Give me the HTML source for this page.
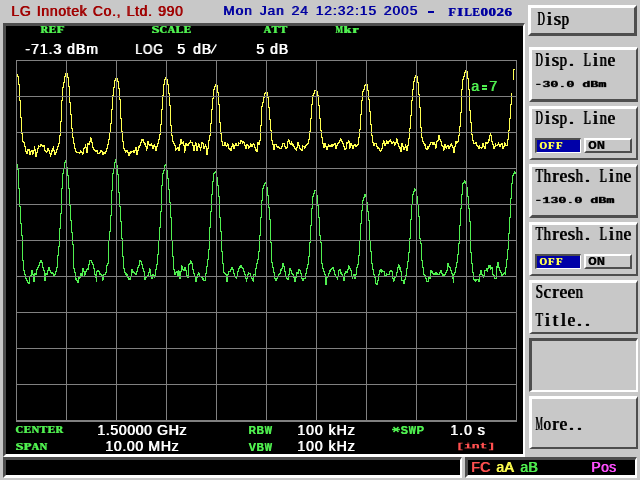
<!DOCTYPE html>
<html><head><meta charset="utf-8"><style>
html,body{margin:0;padding:0;}
body{width:640px;height:480px;background:#c8c8c8;position:relative;overflow:hidden;font-family:"Liberation Sans",sans-serif;}
.t{position:absolute;white-space:pre;line-height:1;will-change:transform;}
.t i{display:inline-block;position:relative;height:1em;font-style:normal;}
.t b{position:absolute;left:50%;top:0;font-weight:inherit;white-space:pre;}
.bx{position:absolute;box-sizing:border-box;border-style:solid;}
</style></head><body>
<div class="t" style="left:11.00px;top:3.78px;font-family:'Liberation Sans',sans-serif;font-weight:normal;font-size:14px;color:#a00000;letter-spacing:0.65px;word-spacing:1px;text-shadow:0.8px 0 0 #a00000;">LG Innotek Co., Ltd. 990</div>
<div class="t" style="left:223.00px;top:3.86px;font-family:'Liberation Sans',sans-serif;font-weight:normal;font-size:13.5px;color:#0000a0;letter-spacing:1.1px;word-spacing:2px;text-shadow:0.8px 0 0 #0000a0;">Mon Jan 24 12:32:15 2005</div>
<div style="position:absolute;left:428px;top:11px;width:6px;height:2px;background:#0000a0;"></div>
<div class="t" style="left:448.00px;top:4.95px;font-family:'Liberation Serif',serif;font-weight:bold;font-size:13.4px;color:#0000a0;display:flex;"><i style="width:8px"><b style="transform:translateX(-50%) scaleX(0.928);text-shadow:0.4px 0 0 #0000a0;">F</b></i><i style="width:8px"><b style="transform:translateX(-50%) scaleX(1.200);text-shadow:0.4px 0 0 #0000a0;">I</b></i><i style="width:8px"><b style="transform:translateX(-50%) scaleX(0.850);text-shadow:0.4px 0 0 #0000a0;">L</b></i><i style="width:8px"><b style="transform:translateX(-50%) scaleX(0.850);text-shadow:0.4px 0 0 #0000a0;">E</b></i><i style="width:8px"><b style="transform:translateX(-50%) scaleX(1.134);text-shadow:0.4px 0 0 #0000a0;">0</b></i><i style="width:8px"><b style="transform:translateX(-50%) scaleX(1.134);text-shadow:0.4px 0 0 #0000a0;">0</b></i><i style="width:8px"><b style="transform:translateX(-50%) scaleX(1.134);text-shadow:0.4px 0 0 #0000a0;">2</b></i><i style="width:8px"><b style="transform:translateX(-50%) scaleX(1.134);text-shadow:0.4px 0 0 #0000a0;">6</b></i></div>
<div class="bx" style="left:3px;top:23px;width:522px;height:434px;border-width:3px 2px 3px 3px;border-color:#4e4e4e #ffffff #ffffff #4e4e4e;background:#000;"></div>
<svg style="position:absolute;left:0;top:0" width="640" height="480">
<g shape-rendering="crispEdges" stroke="none">
<path fill="#ffff50" d="M17 74h1V77h-1ZM18 76h1V85h-1ZM19 84h1V101h-1ZM20 100h1V118h-1ZM21 117h1V134h-1ZM22 133h1V142h-1ZM23 141h1V143h-1ZM24 142h1V147h-1ZM25 146h1V152h-1ZM26 151h1V154h-1ZM27 149h1V154h-1ZM28 149h1V151h-1ZM29 149h1V155h-1ZM30 151h1V155h-1ZM31 150h1V152h-1ZM32 150h1V155h-1ZM33 150h1V154h-1ZM34 146h1V151h-1ZM35 149h1V157h-1ZM36 152h1V157h-1ZM37 148h1V153h-1ZM38 145h1V149h-1ZM39 146h1V147h-1ZM40 144h1V147h-1ZM41 144h1V146h-1ZM42 145h1V147h-1ZM43 145h1V147h-1ZM44 145h1V151h-1ZM45 150h1V152h-1ZM46 151h1V153h-1ZM47 148h1V152h-1ZM48 148h1V151h-1ZM49 150h1V154h-1ZM50 153h1V157h-1ZM51 150h1V155h-1ZM52 148h1V152h-1ZM53 146h1V151h-1ZM54 150h1V155h-1ZM55 152h1V155h-1ZM56 149h1V153h-1ZM57 146h1V150h-1ZM58 143h1V147h-1ZM59 135h1V144h-1ZM60 121h1V136h-1ZM61 100h1V122h-1ZM62 87h1V101h-1ZM63 82h1V88h-1ZM64 76h1V83h-1ZM65 73h1V77h-1ZM66 73h1V74h-1ZM67 73h1V78h-1ZM68 77h1V87h-1ZM69 86h1V103h-1ZM70 102h1V115h-1ZM71 114h1V129h-1ZM72 128h1V138h-1ZM73 137h1V144h-1ZM74 143h1V149h-1ZM75 148h1V152h-1ZM76 151h1V153h-1ZM77 152h1V153h-1ZM78 152h1V153h-1ZM79 152h1V154h-1ZM80 150h1V153h-1ZM81 151h1V153h-1ZM82 152h1V155h-1ZM83 148h1V154h-1ZM84 147h1V149h-1ZM85 144h1V148h-1ZM86 147h1V153h-1ZM87 143h1V153h-1ZM88 143h1V145h-1ZM89 141h1V145h-1ZM90 137h1V142h-1ZM91 138h1V143h-1ZM92 142h1V148h-1ZM93 147h1V150h-1ZM94 149h1V151h-1ZM95 150h1V152h-1ZM96 150h1V152h-1ZM97 150h1V154h-1ZM98 153h1V154h-1ZM99 152h1V154h-1ZM100 150h1V153h-1ZM101 150h1V152h-1ZM102 151h1V155h-1ZM103 152h1V155h-1ZM104 152h1V154h-1ZM105 151h1V154h-1ZM106 148h1V152h-1ZM107 144h1V149h-1ZM108 139h1V145h-1ZM109 132h1V140h-1ZM110 123h1V133h-1ZM111 109h1V124h-1ZM112 95h1V110h-1ZM113 87h1V96h-1ZM114 80h1V88h-1ZM115 78h1V81h-1ZM116 77h1V79h-1ZM117 78h1V82h-1ZM118 81h1V89h-1ZM119 88h1V100h-1ZM120 99h1V119h-1ZM121 118h1V132h-1ZM122 131h1V142h-1ZM123 141h1V149h-1ZM124 148h1V151h-1ZM125 150h1V153h-1ZM126 150h1V152h-1ZM127 150h1V153h-1ZM128 152h1V156h-1ZM129 152h1V156h-1ZM130 151h1V154h-1ZM131 151h1V153h-1ZM132 151h1V152h-1ZM133 150h1V153h-1ZM134 150h1V153h-1ZM135 147h1V151h-1ZM136 147h1V155h-1ZM137 150h1V155h-1ZM138 146h1V151h-1ZM139 145h1V148h-1ZM140 142h1V146h-1ZM141 139h1V143h-1ZM142 139h1V141h-1ZM143 139h1V143h-1ZM144 142h1V145h-1ZM145 143h1V147h-1ZM146 146h1V151h-1ZM147 141h1V149h-1ZM148 141h1V145h-1ZM149 144h1V146h-1ZM150 144h1V146h-1ZM151 143h1V146h-1ZM152 145h1V149h-1ZM153 145h1V149h-1ZM154 144h1V147h-1ZM155 146h1V151h-1ZM156 146h1V151h-1ZM157 143h1V147h-1ZM158 139h1V144h-1ZM159 134h1V140h-1ZM160 124h1V135h-1ZM161 109h1V125h-1ZM162 95h1V110h-1ZM163 84h1V96h-1ZM164 79h1V85h-1ZM165 77h1V80h-1ZM166 76h1V80h-1ZM167 79h1V85h-1ZM168 84h1V94h-1ZM169 93h1V106h-1ZM170 105h1V126h-1ZM171 125h1V136h-1ZM172 135h1V142h-1ZM173 141h1V144h-1ZM174 143h1V146h-1ZM175 145h1V151h-1ZM176 148h1V150h-1ZM177 147h1V149h-1ZM178 147h1V151h-1ZM179 144h1V151h-1ZM180 139h1V145h-1ZM181 139h1V144h-1ZM182 142h1V144h-1ZM183 141h1V146h-1ZM184 145h1V153h-1ZM185 143h1V151h-1ZM186 143h1V146h-1ZM187 144h1V146h-1ZM188 143h1V146h-1ZM189 142h1V144h-1ZM190 140h1V143h-1ZM191 142h1V143h-1ZM192 142h1V146h-1ZM193 145h1V151h-1ZM194 145h1V151h-1ZM195 142h1V146h-1ZM196 143h1V151h-1ZM197 146h1V151h-1ZM198 143h1V147h-1ZM199 144h1V148h-1ZM200 147h1V151h-1ZM201 142h1V148h-1ZM202 142h1V144h-1ZM203 143h1V149h-1ZM204 146h1V149h-1ZM205 144h1V147h-1ZM206 146h1V155h-1ZM207 148h1V155h-1ZM208 140h1V149h-1ZM209 135h1V141h-1ZM210 123h1V136h-1ZM211 109h1V124h-1ZM212 98h1V110h-1ZM213 89h1V99h-1ZM214 86h1V90h-1ZM215 84h1V87h-1ZM216 83h1V86h-1ZM217 85h1V93h-1ZM218 92h1V105h-1ZM219 104h1V123h-1ZM220 122h1V134h-1ZM221 133h1V142h-1ZM222 141h1V146h-1ZM223 145h1V146h-1ZM224 142h1V146h-1ZM225 142h1V146h-1ZM226 145h1V147h-1ZM227 143h1V146h-1ZM228 144h1V149h-1ZM229 148h1V150h-1ZM230 148h1V151h-1ZM231 146h1V151h-1ZM232 143h1V147h-1ZM233 144h1V149h-1ZM234 145h1V149h-1ZM235 143h1V146h-1ZM236 143h1V146h-1ZM237 145h1V146h-1ZM238 142h1V146h-1ZM239 143h1V144h-1ZM240 140h1V144h-1ZM241 140h1V142h-1ZM242 141h1V144h-1ZM243 141h1V143h-1ZM244 142h1V146h-1ZM245 145h1V149h-1ZM246 144h1V149h-1ZM247 144h1V146h-1ZM248 145h1V149h-1ZM249 146h1V148h-1ZM250 143h1V147h-1ZM251 144h1V147h-1ZM252 144h1V147h-1ZM253 143h1V145h-1ZM254 144h1V148h-1ZM255 147h1V151h-1ZM256 149h1V152h-1ZM257 142h1V152h-1ZM258 142h1V145h-1ZM259 140h1V145h-1ZM260 125h1V141h-1ZM261 106h1V126h-1ZM262 102h1V107h-1ZM263 97h1V103h-1ZM264 93h1V98h-1ZM265 92h1V94h-1ZM266 91h1V93h-1ZM267 92h1V98h-1ZM268 97h1V108h-1ZM269 107h1V120h-1ZM270 119h1V131h-1ZM271 130h1V141h-1ZM272 140h1V145h-1ZM273 144h1V150h-1ZM274 144h1V150h-1ZM275 144h1V145h-1ZM276 144h1V147h-1ZM277 146h1V148h-1ZM278 146h1V148h-1ZM279 147h1V149h-1ZM280 148h1V149h-1ZM281 146h1V149h-1ZM282 143h1V147h-1ZM283 143h1V144h-1ZM284 143h1V147h-1ZM285 146h1V149h-1ZM286 147h1V149h-1ZM287 141h1V148h-1ZM288 139h1V142h-1ZM289 140h1V144h-1ZM290 143h1V145h-1ZM291 141h1V145h-1ZM292 143h1V146h-1ZM293 144h1V147h-1ZM294 146h1V149h-1ZM295 148h1V150h-1ZM296 147h1V151h-1ZM297 142h1V148h-1ZM298 142h1V146h-1ZM299 145h1V149h-1ZM300 148h1V150h-1ZM301 149h1V151h-1ZM302 145h1V151h-1ZM303 146h1V147h-1ZM304 146h1V149h-1ZM305 145h1V148h-1ZM306 144h1V146h-1ZM307 143h1V145h-1ZM308 139h1V144h-1ZM309 131h1V140h-1ZM310 118h1V132h-1ZM311 104h1V119h-1ZM312 95h1V105h-1ZM313 93h1V96h-1ZM314 90h1V94h-1ZM315 90h1V91h-1ZM316 90h1V92h-1ZM317 91h1V96h-1ZM318 95h1V106h-1ZM319 105h1V119h-1ZM320 118h1V131h-1ZM321 130h1V138h-1ZM322 137h1V144h-1ZM323 143h1V148h-1ZM324 143h1V148h-1ZM325 143h1V147h-1ZM326 146h1V150h-1ZM327 146h1V150h-1ZM328 144h1V147h-1ZM329 145h1V147h-1ZM330 145h1V147h-1ZM331 144h1V147h-1ZM332 144h1V147h-1ZM333 144h1V146h-1ZM334 143h1V145h-1ZM335 143h1V149h-1ZM336 145h1V149h-1ZM337 143h1V146h-1ZM338 142h1V144h-1ZM339 140h1V143h-1ZM340 138h1V141h-1ZM341 139h1V142h-1ZM342 141h1V144h-1ZM343 143h1V147h-1ZM344 146h1V150h-1ZM345 148h1V150h-1ZM346 142h1V149h-1ZM347 142h1V144h-1ZM348 140h1V143h-1ZM349 141h1V149h-1ZM350 143h1V148h-1ZM351 143h1V146h-1ZM352 145h1V149h-1ZM353 145h1V149h-1ZM354 144h1V146h-1ZM355 144h1V147h-1ZM356 145h1V147h-1ZM357 144h1V146h-1ZM358 137h1V145h-1ZM359 129h1V138h-1ZM360 114h1V130h-1ZM361 100h1V115h-1ZM362 91h1V101h-1ZM363 89h1V92h-1ZM364 85h1V90h-1ZM365 84h1V86h-1ZM366 83h1V85h-1ZM367 84h1V91h-1ZM368 90h1V100h-1ZM369 99h1V112h-1ZM370 111h1V125h-1ZM371 124h1V136h-1ZM372 135h1V143h-1ZM373 142h1V146h-1ZM374 143h1V146h-1ZM375 143h1V144h-1ZM376 143h1V147h-1ZM377 146h1V149h-1ZM378 147h1V149h-1ZM379 148h1V151h-1ZM380 150h1V152h-1ZM381 148h1V151h-1ZM382 143h1V149h-1ZM383 140h1V144h-1ZM384 141h1V146h-1ZM385 143h1V146h-1ZM386 140h1V144h-1ZM387 141h1V144h-1ZM388 141h1V144h-1ZM389 140h1V142h-1ZM390 139h1V142h-1ZM391 141h1V144h-1ZM392 142h1V144h-1ZM393 141h1V143h-1ZM394 142h1V146h-1ZM395 142h1V145h-1ZM396 138h1V143h-1ZM397 139h1V144h-1ZM398 143h1V147h-1ZM399 146h1V149h-1ZM400 147h1V152h-1ZM401 143h1V152h-1ZM402 143h1V147h-1ZM403 146h1V150h-1ZM404 147h1V150h-1ZM405 144h1V148h-1ZM406 146h1V151h-1ZM407 145h1V151h-1ZM408 138h1V146h-1ZM409 128h1V139h-1ZM410 115h1V129h-1ZM411 100h1V116h-1ZM412 89h1V101h-1ZM413 81h1V90h-1ZM414 77h1V82h-1ZM415 75h1V78h-1ZM416 75h1V77h-1ZM417 76h1V83h-1ZM418 82h1V95h-1ZM419 94h1V108h-1ZM420 107h1V128h-1ZM421 127h1V138h-1ZM422 137h1V142h-1ZM423 141h1V144h-1ZM424 143h1V146h-1ZM425 144h1V149h-1ZM426 148h1V150h-1ZM427 146h1V150h-1ZM428 146h1V149h-1ZM429 144h1V147h-1ZM430 142h1V145h-1ZM431 142h1V143h-1ZM432 142h1V145h-1ZM433 142h1V145h-1ZM434 142h1V145h-1ZM435 144h1V149h-1ZM436 141h1V148h-1ZM437 140h1V142h-1ZM438 135h1V141h-1ZM439 135h1V140h-1ZM440 139h1V142h-1ZM441 141h1V146h-1ZM442 145h1V147h-1ZM443 146h1V151h-1ZM444 144h1V150h-1ZM445 144h1V148h-1ZM446 146h1V149h-1ZM447 145h1V147h-1ZM448 145h1V149h-1ZM449 146h1V149h-1ZM450 144h1V147h-1ZM451 143h1V146h-1ZM452 145h1V148h-1ZM453 147h1V153h-1ZM454 146h1V153h-1ZM455 141h1V147h-1ZM456 141h1V144h-1ZM457 141h1V143h-1ZM458 135h1V142h-1ZM459 126h1V136h-1ZM460 112h1V127h-1ZM461 89h1V113h-1ZM462 79h1V90h-1ZM463 76h1V80h-1ZM464 72h1V77h-1ZM465 70h1V73h-1ZM466 69h1V72h-1ZM467 71h1V79h-1ZM468 78h1V90h-1ZM469 89h1V111h-1ZM470 110h1V123h-1ZM471 122h1V135h-1ZM472 134h1V141h-1ZM473 140h1V144h-1ZM474 143h1V144h-1ZM475 142h1V144h-1ZM476 142h1V146h-1ZM477 145h1V147h-1ZM478 146h1V149h-1ZM479 145h1V149h-1ZM480 147h1V148h-1ZM481 147h1V149h-1ZM482 143h1V148h-1ZM483 143h1V147h-1ZM484 146h1V149h-1ZM485 142h1V149h-1ZM486 142h1V144h-1ZM487 142h1V144h-1ZM488 139h1V143h-1ZM489 135h1V141h-1ZM490 133h1V136h-1ZM491 135h1V142h-1ZM492 141h1V145h-1ZM493 144h1V149h-1ZM494 146h1V149h-1ZM495 143h1V147h-1ZM496 145h1V146h-1ZM497 144h1V146h-1ZM498 142h1V145h-1ZM499 144h1V147h-1ZM500 144h1V147h-1ZM501 143h1V145h-1ZM502 143h1V149h-1ZM503 146h1V149h-1ZM504 142h1V147h-1ZM505 143h1V146h-1ZM506 145h1V146h-1ZM507 139h1V146h-1ZM508 130h1V140h-1ZM509 118h1V131h-1ZM510 104h1V119h-1ZM511 93h1V105h-1Z"/>
<path fill="#ffff50" d="M513 69h1V80h-1ZM514 69h1v1h-1Z"/>
<path fill="#50f050" d="M17 164h1V170h-1ZM18 169h1V189h-1ZM19 188h1V207h-1ZM20 206h1V224h-1ZM21 223h1V236h-1ZM22 235h1V261h-1ZM23 260h1V271h-1ZM24 270h1V275h-1ZM25 274h1V279h-1ZM26 278h1V281h-1ZM27 280h1V283h-1ZM28 282h1V284h-1ZM29 276h1V284h-1ZM30 275h1V277h-1ZM31 270h1V276h-1ZM32 270h1V275h-1ZM33 274h1V282h-1ZM34 273h1V282h-1ZM35 273h1V275h-1ZM36 269h1V275h-1ZM37 267h1V270h-1ZM38 265h1V268h-1ZM39 262h1V266h-1ZM40 260h1V263h-1ZM41 260h1V263h-1ZM42 262h1V268h-1ZM43 267h1V271h-1ZM44 270h1V281h-1ZM45 273h1V281h-1ZM46 273h1V275h-1ZM47 270h1V275h-1ZM48 267h1V271h-1ZM49 267h1V271h-1ZM50 270h1V273h-1ZM51 272h1V274h-1ZM52 272h1V274h-1ZM53 273h1V277h-1ZM54 274h1V277h-1ZM55 271h1V275h-1ZM56 267h1V272h-1ZM57 255h1V268h-1ZM58 246h1V256h-1ZM59 228h1V247h-1ZM60 213h1V229h-1ZM61 188h1V214h-1ZM62 173h1V189h-1ZM63 168h1V174h-1ZM64 162h1V169h-1ZM65 160h1V163h-1ZM66 160h1V168h-1ZM67 167h1V176h-1ZM68 175h1V189h-1ZM69 188h1V206h-1ZM70 205h1V221h-1ZM71 220h1V233h-1ZM72 232h1V245h-1ZM73 244h1V269h-1ZM74 268h1V273h-1ZM75 272h1V280h-1ZM76 278h1V281h-1ZM77 280h1V283h-1ZM78 277h1V283h-1ZM79 277h1V279h-1ZM80 273h1V278h-1ZM81 273h1V277h-1ZM82 268h1V276h-1ZM83 268h1V272h-1ZM84 271h1V276h-1ZM85 271h1V275h-1ZM86 269h1V272h-1ZM87 268h1V270h-1ZM88 264h1V270h-1ZM89 260h1V265h-1ZM90 260h1V261h-1ZM91 260h1V263h-1ZM92 262h1V265h-1ZM93 264h1V269h-1ZM94 268h1V275h-1ZM95 274h1V278h-1ZM96 271h1V282h-1ZM97 270h1V272h-1ZM98 270h1V272h-1ZM99 271h1V275h-1ZM100 273h1V275h-1ZM101 274h1V276h-1ZM102 275h1V281h-1ZM103 274h1V280h-1ZM104 274h1V275h-1ZM105 272h1V275h-1ZM106 265h1V273h-1ZM107 263h1V266h-1ZM108 240h1V264h-1ZM109 231h1V241h-1ZM110 215h1V232h-1ZM111 190h1V216h-1ZM112 173h1V191h-1ZM113 168h1V174h-1ZM114 162h1V169h-1ZM115 159h1V163h-1ZM116 160h1V166h-1ZM117 165h1V175h-1ZM118 174h1V193h-1ZM119 192h1V207h-1ZM120 206h1V222h-1ZM121 221h1V239h-1ZM122 238h1V257h-1ZM123 256h1V269h-1ZM124 268h1V273h-1ZM125 272h1V275h-1ZM126 273h1V276h-1ZM127 274h1V278h-1ZM128 276h1V280h-1ZM129 278h1V280h-1ZM130 276h1V280h-1ZM131 269h1V277h-1ZM132 269h1V273h-1ZM133 271h1V273h-1ZM134 272h1V274h-1ZM135 273h1V275h-1ZM136 271h1V275h-1ZM137 267h1V272h-1ZM138 265h1V268h-1ZM139 260h1V266h-1ZM140 260h1V262h-1ZM141 261h1V265h-1ZM142 264h1V269h-1ZM143 268h1V272h-1ZM144 271h1V280h-1ZM145 276h1V280h-1ZM146 276h1V278h-1ZM147 275h1V277h-1ZM148 272h1V276h-1ZM149 268h1V273h-1ZM150 269h1V276h-1ZM151 275h1V279h-1ZM152 274h1V279h-1ZM153 274h1V276h-1ZM154 275h1V278h-1ZM155 269h1V276h-1ZM156 264h1V270h-1ZM157 254h1V265h-1ZM158 240h1V255h-1ZM159 227h1V241h-1ZM160 211h1V228h-1ZM161 185h1V212h-1ZM162 173h1V186h-1ZM163 170h1V174h-1ZM164 165h1V171h-1ZM165 164h1V166h-1ZM166 165h1V171h-1ZM167 170h1V179h-1ZM168 178h1V190h-1ZM169 189h1V203h-1ZM170 202h1V218h-1ZM171 217h1V241h-1ZM172 240h1V257h-1ZM173 256h1V270h-1ZM174 269h1V275h-1ZM175 272h1V275h-1ZM176 271h1V273h-1ZM177 271h1V276h-1ZM178 270h1V276h-1ZM179 271h1V279h-1ZM180 271h1V279h-1ZM181 265h1V272h-1ZM182 266h1V270h-1ZM183 269h1V271h-1ZM184 267h1V271h-1ZM185 267h1V271h-1ZM186 270h1V277h-1ZM187 275h1V278h-1ZM188 264h1V278h-1ZM189 263h1V265h-1ZM190 260h1V264h-1ZM191 261h1V264h-1ZM192 263h1V270h-1ZM193 269h1V274h-1ZM194 273h1V277h-1ZM195 276h1V282h-1ZM196 276h1V282h-1ZM197 274h1V278h-1ZM198 272h1V275h-1ZM199 273h1V277h-1ZM200 276h1V277h-1ZM201 276h1V278h-1ZM202 277h1V280h-1ZM203 278h1V281h-1ZM204 280h1V281h-1ZM205 273h1V281h-1ZM206 266h1V274h-1ZM207 259h1V267h-1ZM208 249h1V260h-1ZM209 227h1V250h-1ZM210 211h1V228h-1ZM211 194h1V212h-1ZM212 181h1V195h-1ZM213 173h1V182h-1ZM214 172h1V174h-1ZM215 171h1V173h-1ZM216 172h1V178h-1ZM217 177h1V186h-1ZM218 185h1V197h-1ZM219 196h1V218h-1ZM220 217h1V232h-1ZM221 231h1V252h-1ZM222 251h1V264h-1ZM223 263h1V273h-1ZM224 272h1V274h-1ZM225 273h1V275h-1ZM226 274h1V282h-1ZM227 274h1V282h-1ZM228 271h1V275h-1ZM229 271h1V272h-1ZM230 269h1V272h-1ZM231 267h1V270h-1ZM232 267h1V270h-1ZM233 269h1V274h-1ZM234 273h1V277h-1ZM235 276h1V278h-1ZM236 276h1V279h-1ZM237 271h1V277h-1ZM238 268h1V272h-1ZM239 266h1V269h-1ZM240 265h1V268h-1ZM241 265h1V268h-1ZM242 267h1V269h-1ZM243 268h1V272h-1ZM244 271h1V275h-1ZM245 274h1V279h-1ZM246 278h1V282h-1ZM247 274h1V279h-1ZM248 272h1V275h-1ZM249 273h1V274h-1ZM250 273h1V277h-1ZM251 276h1V279h-1ZM252 278h1V281h-1ZM253 274h1V282h-1ZM254 274h1V275h-1ZM255 268h1V277h-1ZM256 263h1V269h-1ZM257 259h1V264h-1ZM258 251h1V260h-1ZM259 235h1V252h-1ZM260 217h1V236h-1ZM261 200h1V218h-1ZM262 188h1V201h-1ZM263 185h1V189h-1ZM264 183h1V186h-1ZM265 182h1V184h-1ZM266 183h1V188h-1ZM267 187h1V196h-1ZM268 195h1V208h-1ZM269 207h1V220h-1ZM270 219h1V243h-1ZM271 242h1V263h-1ZM272 262h1V268h-1ZM273 267h1V273h-1ZM274 272h1V279h-1ZM275 278h1V281h-1ZM276 278h1V281h-1ZM277 276h1V279h-1ZM278 274h1V277h-1ZM279 273h1V275h-1ZM280 269h1V274h-1ZM281 268h1V271h-1ZM282 263h1V269h-1ZM283 263h1V267h-1ZM284 266h1V272h-1ZM285 271h1V277h-1ZM286 276h1V279h-1ZM287 278h1V280h-1ZM288 274h1V280h-1ZM289 268h1V275h-1ZM290 268h1V271h-1ZM291 270h1V274h-1ZM292 273h1V275h-1ZM293 274h1V278h-1ZM294 277h1V282h-1ZM295 277h1V282h-1ZM296 272h1V278h-1ZM297 272h1V274h-1ZM298 269h1V274h-1ZM299 269h1V271h-1ZM300 270h1V274h-1ZM301 273h1V279h-1ZM302 278h1V281h-1ZM303 278h1V281h-1ZM304 278h1V279h-1ZM305 273h1V279h-1ZM306 268h1V274h-1ZM307 264h1V269h-1ZM308 256h1V265h-1ZM309 242h1V257h-1ZM310 225h1V243h-1ZM311 208h1V226h-1ZM312 196h1V209h-1ZM313 193h1V197h-1ZM314 190h1V194h-1ZM315 190h1V191h-1ZM316 190h1V196h-1ZM317 195h1V206h-1ZM318 205h1V218h-1ZM319 217h1V236h-1ZM320 235h1V243h-1ZM321 242h1V264h-1ZM322 263h1V269h-1ZM323 268h1V272h-1ZM324 271h1V275h-1ZM325 274h1V285h-1ZM326 277h1V285h-1ZM327 276h1V278h-1ZM328 273h1V277h-1ZM329 270h1V274h-1ZM330 269h1V272h-1ZM331 268h1V270h-1ZM332 267h1V269h-1ZM333 267h1V271h-1ZM334 270h1V275h-1ZM335 274h1V277h-1ZM336 276h1V278h-1ZM337 276h1V280h-1ZM338 270h1V277h-1ZM339 269h1V271h-1ZM340 269h1V274h-1ZM341 272h1V275h-1ZM342 274h1V277h-1ZM343 276h1V281h-1ZM344 273h1V281h-1ZM345 271h1V274h-1ZM346 271h1V273h-1ZM347 269h1V273h-1ZM348 265h1V270h-1ZM349 266h1V269h-1ZM350 268h1V271h-1ZM351 270h1V277h-1ZM352 276h1V279h-1ZM353 274h1V277h-1ZM354 274h1V279h-1ZM355 274h1V279h-1ZM356 267h1V275h-1ZM357 264h1V268h-1ZM358 255h1V265h-1ZM359 240h1V256h-1ZM360 223h1V241h-1ZM361 210h1V224h-1ZM362 200h1V211h-1ZM363 197h1V201h-1ZM364 194h1V198h-1ZM365 194h1V197h-1ZM366 196h1V203h-1ZM367 202h1V212h-1ZM368 211h1V221h-1ZM369 220h1V241h-1ZM370 240h1V252h-1ZM371 251h1V264h-1ZM372 263h1V270h-1ZM373 269h1V275h-1ZM374 274h1V278h-1ZM375 277h1V284h-1ZM376 283h1V285h-1ZM377 280h1V285h-1ZM378 274h1V281h-1ZM379 270h1V275h-1ZM380 269h1V272h-1ZM381 269h1V273h-1ZM382 270h1V272h-1ZM383 271h1V272h-1ZM384 271h1V276h-1ZM385 275h1V277h-1ZM386 273h1V277h-1ZM387 274h1V275h-1ZM388 274h1V275h-1ZM389 271h1V275h-1ZM390 270h1V272h-1ZM391 270h1V272h-1ZM392 271h1V279h-1ZM393 278h1V282h-1ZM394 277h1V281h-1ZM395 276h1V278h-1ZM396 272h1V277h-1ZM397 267h1V273h-1ZM398 264h1V268h-1ZM399 265h1V270h-1ZM400 267h1V272h-1ZM401 271h1V281h-1ZM402 280h1V281h-1ZM403 280h1V284h-1ZM404 279h1V284h-1ZM405 275h1V280h-1ZM406 268h1V276h-1ZM407 261h1V269h-1ZM408 252h1V262h-1ZM409 238h1V253h-1ZM410 219h1V239h-1ZM411 204h1V220h-1ZM412 194h1V205h-1ZM413 191h1V195h-1ZM414 188h1V192h-1ZM415 189h1V191h-1ZM416 190h1V197h-1ZM417 196h1V205h-1ZM418 204h1V217h-1ZM419 216h1V239h-1ZM420 238h1V244h-1ZM421 243h1V261h-1ZM422 260h1V268h-1ZM423 267h1V275h-1ZM424 274h1V276h-1ZM425 275h1V279h-1ZM426 278h1V282h-1ZM427 281h1V282h-1ZM428 276h1V282h-1ZM429 276h1V279h-1ZM430 270h1V279h-1ZM431 270h1V273h-1ZM432 271h1V274h-1ZM433 273h1V275h-1ZM434 273h1V275h-1ZM435 272h1V275h-1ZM436 272h1V275h-1ZM437 273h1V275h-1ZM438 274h1V275h-1ZM439 272h1V275h-1ZM440 270h1V273h-1ZM441 270h1V274h-1ZM442 273h1V276h-1ZM443 274h1V276h-1ZM444 274h1V276h-1ZM445 272h1V275h-1ZM446 270h1V273h-1ZM447 263h1V271h-1ZM448 263h1V267h-1ZM449 266h1V268h-1ZM450 267h1V271h-1ZM451 270h1V274h-1ZM452 273h1V279h-1ZM453 274h1V283h-1ZM454 272h1V275h-1ZM455 267h1V273h-1ZM456 262h1V268h-1ZM457 254h1V263h-1ZM458 243h1V255h-1ZM459 225h1V244h-1ZM460 208h1V226h-1ZM461 194h1V209h-1ZM462 183h1V195h-1ZM463 182h1V184h-1ZM464 180h1V183h-1ZM465 181h1V184h-1ZM466 183h1V188h-1ZM467 187h1V197h-1ZM468 196h1V209h-1ZM469 208h1V222h-1ZM470 221h1V253h-1ZM471 252h1V264h-1ZM472 263h1V273h-1ZM473 272h1V280h-1ZM474 279h1V281h-1ZM475 279h1V282h-1ZM476 279h1V281h-1ZM477 279h1V280h-1ZM478 279h1V282h-1ZM479 274h1V282h-1ZM480 270h1V275h-1ZM481 270h1V275h-1ZM482 274h1V277h-1ZM483 275h1V278h-1ZM484 270h1V276h-1ZM485 270h1V271h-1ZM486 268h1V271h-1ZM487 268h1V272h-1ZM488 265h1V269h-1ZM489 265h1V268h-1ZM490 265h1V270h-1ZM491 267h1V269h-1ZM492 267h1V275h-1ZM493 274h1V276h-1ZM494 275h1V279h-1ZM495 278h1V279h-1ZM496 266h1V279h-1ZM497 262h1V268h-1ZM498 262h1V268h-1ZM499 267h1V271h-1ZM500 270h1V273h-1ZM501 272h1V276h-1ZM502 274h1V276h-1ZM503 273h1V275h-1ZM504 272h1V274h-1ZM505 267h1V275h-1ZM506 259h1V268h-1ZM507 249h1V260h-1ZM508 233h1V250h-1ZM509 217h1V234h-1ZM510 198h1V218h-1ZM511 183h1V199h-1ZM512 175h1V184h-1ZM513 173h1V176h-1ZM514 171h1V174h-1ZM515 172h1V174h-1Z"/>
</g>
<g stroke="#808080" stroke-width="1" shape-rendering="crispEdges" fill="none"><path d="M16.5 60V421M66.5 60V421M116.5 60V421M166.5 60V421M216.5 60V421M266.5 60V421M316.5 60V421M366.5 60V421M416.5 60V421M466.5 60V421M516.5 60V421"/><path d="M16 60.5H517M16 96.5H517M16 132.5H517M16 168.5H517M16 204.5H517M16 240.5H517M16 276.5H517M16 312.5H517M16 348.5H517M16 384.5H517M16 421H517"/><path d="M16 421H517" stroke-width="2"/></g>
</svg>
<div class="t" style="left:40.00px;top:24.05px;font-family:'Liberation Serif',serif;font-weight:bold;font-size:10.7px;color:#50f050;display:flex;"><i style="width:8px"><b style="transform:translateX(-50%) scaleX(0.984);text-shadow:0.8px 0 0 #50f050;">R</b></i><i style="width:8px"><b style="transform:translateX(-50%) scaleX(1.065);text-shadow:0.8px 0 0 #50f050;">E</b></i><i style="width:8px"><b style="transform:translateX(-50%) scaleX(1.163);text-shadow:0.8px 0 0 #50f050;">F</b></i></div>
<div class="t" style="left:151.00px;top:24.05px;font-family:'Liberation Serif',serif;font-weight:bold;font-size:10.7px;color:#50f050;display:flex;"><i style="width:8px"><b style="transform:translateX(-50%) scaleX(1.277);text-shadow:0.8px 0 0 #50f050;">S</b></i><i style="width:8px"><b style="transform:translateX(-50%) scaleX(0.984);text-shadow:0.8px 0 0 #50f050;">C</b></i><i style="width:8px"><b style="transform:translateX(-50%) scaleX(0.984);text-shadow:0.8px 0 0 #50f050;">A</b></i><i style="width:8px"><b style="transform:translateX(-50%) scaleX(1.065);text-shadow:0.8px 0 0 #50f050;">L</b></i><i style="width:8px"><b style="transform:translateX(-50%) scaleX(1.065);text-shadow:0.8px 0 0 #50f050;">E</b></i></div>
<div class="t" style="left:263.00px;top:24.05px;font-family:'Liberation Serif',serif;font-weight:bold;font-size:10.7px;color:#50f050;display:flex;"><i style="width:8px"><b style="transform:translateX(-50%) scaleX(0.984);text-shadow:0.8px 0 0 #50f050;">A</b></i><i style="width:8px"><b style="transform:translateX(-50%) scaleX(1.065);text-shadow:0.8px 0 0 #50f050;">T</b></i><i style="width:8px"><b style="transform:translateX(-50%) scaleX(1.065);text-shadow:0.8px 0 0 #50f050;">T</b></i></div>
<div class="t" style="left:335.00px;top:24.05px;font-family:'Liberation Serif',serif;font-weight:bold;font-size:10.7px;color:#50f050;display:flex;"><i style="width:8px"><b style="transform:translateX(-50%) scaleX(0.753);text-shadow:0.8px 0 0 #50f050;">M</b></i><i style="width:8px"><b style="transform:translateX(-50%) scaleX(1.277);text-shadow:0.8px 0 0 #50f050;">k</b></i><i style="width:8px"><b style="transform:translateX(-50%) scaleX(1.300);text-shadow:0.8px 0 0 #50f050;">r</b></i></div>
<div class="t" style="left:25.00px;top:41.78px;font-family:'Liberation Sans',sans-serif;font-weight:normal;font-size:14px;color:#fff;letter-spacing:1.0px;text-shadow:0.8px 0 0 #fff;">-71.3 dBm</div>
<div class="t" style="left:135.00px;top:41.78px;font-family:'Liberation Sans',sans-serif;font-weight:normal;font-size:14px;color:#fff;letter-spacing:1.0px;text-shadow:0.8px 0 0 #fff;transform:scale(0.87,1.0);transform-origin:0 0;">LOG</div>
<div class="t" style="left:177.00px;top:41.78px;font-family:'Liberation Sans',sans-serif;font-weight:normal;font-size:14px;color:#fff;letter-spacing:1.0px;word-spacing:2px;text-shadow:0.8px 0 0 #fff;">5 dB</div>
<svg style="position:absolute;left:0;top:0" width="640" height="480"><path d="M211 53.5L216.3 44.3" stroke="#fff" stroke-width="1.5" fill="none"/></svg>
<div class="t" style="left:256.00px;top:41.78px;font-family:'Liberation Sans',sans-serif;font-weight:normal;font-size:14px;color:#fff;letter-spacing:1.0px;text-shadow:0.8px 0 0 #fff;">5 dB</div>
<div class="t" style="left:471.00px;top:78.78px;font-family:'Liberation Sans',sans-serif;font-weight:normal;font-size:14px;color:#50f050;text-shadow:0.8px 0 0 #50f050;">a</div>
<div class="t" style="left:488.50px;top:78.78px;font-family:'Liberation Sans',sans-serif;font-weight:normal;font-size:14px;color:#50f050;text-shadow:0.8px 0 0 #50f050;">7</div>
<div style="position:absolute;left:482px;top:85px;width:5px;height:2px;background:#50f050"></div><div style="position:absolute;left:482px;top:88px;width:5px;height:2px;background:#50f050"></div>
<div class="t" style="left:15.30px;top:424.05px;font-family:'Liberation Serif',serif;font-weight:bold;font-size:10.7px;color:#50f050;display:flex;"><i style="width:8px"><b style="transform:translateX(-50%) scaleX(0.984);text-shadow:0.8px 0 0 #50f050;">C</b></i><i style="width:8px"><b style="transform:translateX(-50%) scaleX(1.065);text-shadow:0.8px 0 0 #50f050;">E</b></i><i style="width:8px"><b style="transform:translateX(-50%) scaleX(0.984);text-shadow:0.8px 0 0 #50f050;">N</b></i><i style="width:8px"><b style="transform:translateX(-50%) scaleX(1.065);text-shadow:0.8px 0 0 #50f050;">T</b></i><i style="width:8px"><b style="transform:translateX(-50%) scaleX(1.065);text-shadow:0.8px 0 0 #50f050;">E</b></i><i style="width:8px"><b style="transform:translateX(-50%) scaleX(0.984);text-shadow:0.8px 0 0 #50f050;">R</b></i></div>
<div class="t" style="left:15.30px;top:441.05px;font-family:'Liberation Serif',serif;font-weight:bold;font-size:10.7px;color:#50f050;display:flex;"><i style="width:8px"><b style="transform:translateX(-50%) scaleX(1.277);text-shadow:0.8px 0 0 #50f050;">S</b></i><i style="width:8px"><b style="transform:translateX(-50%) scaleX(1.163);text-shadow:0.8px 0 0 #50f050;">P</b></i><i style="width:8px"><b style="transform:translateX(-50%) scaleX(0.984);text-shadow:0.8px 0 0 #50f050;">A</b></i><i style="width:8px"><b style="transform:translateX(-50%) scaleX(0.984);text-shadow:0.8px 0 0 #50f050;">N</b></i></div>
<div class="t" style="left:248.00px;top:424.92px;font-family:'Liberation Sans',sans-serif;font-weight:bold;font-size:10.6px;color:#50f050;display:flex;"><i style="width:8px"><b style="transform:translateX(-50%) scaleX(0.941);text-shadow:0.7px 0 0 #50f050;">R</b></i><i style="width:8px"><b style="transform:translateX(-50%) scaleX(0.941);text-shadow:0.7px 0 0 #50f050;">B</b></i><i style="width:8px"><b style="transform:translateX(-50%) scaleX(0.720);text-shadow:0.7px 0 0 #50f050;">W</b></i></div>
<div class="t" style="left:248.00px;top:441.92px;font-family:'Liberation Sans',sans-serif;font-weight:bold;font-size:10.6px;color:#50f050;display:flex;"><i style="width:8px"><b style="transform:translateX(-50%) scaleX(1.018);text-shadow:0.7px 0 0 #50f050;">V</b></i><i style="width:8px"><b style="transform:translateX(-50%) scaleX(0.941);text-shadow:0.7px 0 0 #50f050;">B</b></i><i style="width:8px"><b style="transform:translateX(-50%) scaleX(0.720);text-shadow:0.7px 0 0 #50f050;">W</b></i></div>
<div class="t" style="left:399.50px;top:424.92px;font-family:'Liberation Sans',sans-serif;font-weight:bold;font-size:10.6px;color:#50f050;display:flex;"><i style="width:8px"><b style="transform:translateX(-50%) scaleX(1.018);text-shadow:0.7px 0 0 #50f050;">S</b></i><i style="width:8px"><b style="transform:translateX(-50%) scaleX(0.720);text-shadow:0.7px 0 0 #50f050;">W</b></i><i style="width:8px"><b style="transform:translateX(-50%) scaleX(1.018);text-shadow:0.7px 0 0 #50f050;">P</b></i></div>
<svg style="position:absolute;left:0;top:0" width="640" height="480"><g stroke="#50f050" stroke-width="1.6" fill="none"><path d="M392 429.5H400M393.5 427L398.5 432M398.5 427L393.5 432"/></g></svg>
<div class="t" style="left:456.00px;top:441.91px;font-family:'Liberation Mono',monospace;font-weight:bold;font-size:13px;color:#ff5050;text-shadow:0.5px 0 0 #ff5050;transform:scale(1.0,0.64);transform-origin:0 0;">[int]</div>
<div class="t" style="left:97.00px;top:422.78px;font-family:'Liberation Sans',sans-serif;font-weight:normal;font-size:14px;color:#fff;letter-spacing:0.66px;text-shadow:0.8px 0 0 #fff;">1.50000 GHz</div>
<div class="t" style="left:105.00px;top:438.78px;font-family:'Liberation Sans',sans-serif;font-weight:normal;font-size:14px;color:#fff;letter-spacing:0.69px;text-shadow:0.8px 0 0 #fff;">10.00 MHz</div>
<div class="t" style="left:297.00px;top:422.78px;font-family:'Liberation Sans',sans-serif;font-weight:normal;font-size:14px;color:#fff;letter-spacing:1.0px;text-shadow:0.8px 0 0 #fff;">100 kHz</div>
<div class="t" style="left:297.00px;top:438.78px;font-family:'Liberation Sans',sans-serif;font-weight:normal;font-size:14px;color:#fff;letter-spacing:1.0px;text-shadow:0.8px 0 0 #fff;">100 kHz</div>
<div class="t" style="left:450.00px;top:422.78px;font-family:'Liberation Sans',sans-serif;font-weight:normal;font-size:14px;color:#fff;letter-spacing:1.0px;text-shadow:0.8px 0 0 #fff;">1.0 s</div>
<div class="bx" style="left:3px;top:457px;width:459px;height:21px;border-width:3px 2px 3px 3px;border-color:#4e4e4e #ffffff #ffffff #4e4e4e;background:#000;"></div>
<div class="bx" style="left:465px;top:457px;width:172px;height:21px;border-width:3px 2px 3px 3px;border-color:#4e4e4e #ffffff #ffffff #4e4e4e;background:#000;"></div>
<div class="t" style="left:471.00px;top:459.78px;font-family:'Liberation Sans',sans-serif;font-weight:normal;font-size:14px;color:#ff5050;letter-spacing:0.3px;text-shadow:0.8px 0 0 #ff5050;">FC</div>
<div class="t" style="left:496.00px;top:459.78px;font-family:'Liberation Sans',sans-serif;font-weight:normal;font-size:14px;color:#ffff50;letter-spacing:0.3px;text-shadow:0.8px 0 0 #ffff50;">aA</div>
<div class="t" style="left:520.00px;top:459.78px;font-family:'Liberation Sans',sans-serif;font-weight:normal;font-size:14px;color:#50f050;letter-spacing:0.3px;text-shadow:0.8px 0 0 #50f050;">aB</div>
<div class="t" style="left:591.00px;top:459.78px;font-family:'Liberation Sans',sans-serif;font-weight:normal;font-size:14px;color:#ff50ff;letter-spacing:0.3px;text-shadow:0.8px 0 0 #ff50ff;">Pos</div>
<div class="bx" style="left:528px;top:5px;width:109px;height:31px;border-width:3px 3px 3px 3px;border-color:#ffffff #4e4e4e #4e4e4e #ffffff;background:#c8c8c8;"></div>
<div class="t" style="left:537.00px;top:9.38px;font-family:'Liberation Serif',serif;font-weight:normal;font-size:19.85px;color:#000;display:flex;"><i style="width:8px"><b style="transform:translateX(-50%) scaleX(0.516);text-shadow:1.0px 0 0 #000;">D</b></i><i style="width:8px"><b style="transform:translateX(-50%);text-shadow:1.0px 0 0 #000;">i</b></i><i style="width:8px"><b style="transform:translateX(-50%) scaleX(0.958);text-shadow:1.0px 0 0 #000;">s</b></i><i style="width:8px"><b style="transform:translateX(-50%) scaleX(0.746);text-shadow:1.0px 0 0 #000;">p</b></i></div>
<div class="bx" style="left:529px;top:47px;width:109px;height:55px;border-width:3px 2px 3px 3px;border-color:#ffffff #4e4e4e #4e4e4e #ffffff;background:#c8c8c8;"></div>
<div class="t" style="left:535.00px;top:50.38px;font-family:'Liberation Serif',serif;font-weight:normal;font-size:19.85px;color:#000;display:flex;"><i style="width:8px"><b style="transform:translateX(-50%) scaleX(0.516);text-shadow:1.0px 0 0 #000;">D</b></i><i style="width:8px"><b style="transform:translateX(-50%);text-shadow:1.0px 0 0 #000;">i</b></i><i style="width:8px"><b style="transform:translateX(-50%) scaleX(0.958);text-shadow:1.0px 0 0 #000;">s</b></i><i style="width:8px"><b style="transform:translateX(-50%) scaleX(0.746);text-shadow:1.0px 0 0 #000;">p</b></i><i style="width:8px"><b style="transform:translateX(-50%);text-shadow:1.0px 0 0 #000;">.</b></i><i style="width:8px"></i><i style="width:8px"><b style="transform:translateX(-50%) scaleX(0.610);text-shadow:1.0px 0 0 #000;">L</b></i><i style="width:8px"><b style="transform:translateX(-50%);text-shadow:1.0px 0 0 #000;">i</b></i><i style="width:8px"><b style="transform:translateX(-50%) scaleX(0.746);text-shadow:1.0px 0 0 #000;">n</b></i><i style="width:8px"><b style="transform:translateX(-50%) scaleX(0.840);text-shadow:1.0px 0 0 #000;">e</b></i></div>
<div class="t" style="left:533.50px;top:79.67px;font-family:'Liberation Mono',monospace;font-weight:bold;font-size:13.33px;color:#000;text-shadow:0.8px 0 0 #000;transform:scale(1.0,0.72);transform-origin:0 0;">-30.0 dBm</div>
<div class="bx" style="left:529px;top:106px;width:109px;height:54px;border-width:3px 2px 2px 3px;border-color:#ffffff #4e4e4e #4e4e4e #ffffff;background:#c8c8c8;"></div>
<div class="t" style="left:535.00px;top:108.38px;font-family:'Liberation Serif',serif;font-weight:normal;font-size:19.85px;color:#000;display:flex;"><i style="width:8px"><b style="transform:translateX(-50%) scaleX(0.516);text-shadow:1.0px 0 0 #000;">D</b></i><i style="width:8px"><b style="transform:translateX(-50%);text-shadow:1.0px 0 0 #000;">i</b></i><i style="width:8px"><b style="transform:translateX(-50%) scaleX(0.958);text-shadow:1.0px 0 0 #000;">s</b></i><i style="width:8px"><b style="transform:translateX(-50%) scaleX(0.746);text-shadow:1.0px 0 0 #000;">p</b></i><i style="width:8px"><b style="transform:translateX(-50%);text-shadow:1.0px 0 0 #000;">.</b></i><i style="width:8px"></i><i style="width:8px"><b style="transform:translateX(-50%) scaleX(0.610);text-shadow:1.0px 0 0 #000;">L</b></i><i style="width:8px"><b style="transform:translateX(-50%);text-shadow:1.0px 0 0 #000;">i</b></i><i style="width:8px"><b style="transform:translateX(-50%) scaleX(0.746);text-shadow:1.0px 0 0 #000;">n</b></i><i style="width:8px"><b style="transform:translateX(-50%) scaleX(0.840);text-shadow:1.0px 0 0 #000;">e</b></i></div>
<div class="bx" style="left:535px;top:138px;width:46px;height:15px;border-width:2px 1px 1px 2px;border-color:#4e4e4e #ffffff #ffffff #4e4e4e;background:#0000a8;"></div>
<div class="t" style="left:539.00px;top:140.05px;font-family:'Liberation Serif',serif;font-weight:bold;font-size:10.7px;color:#ffff50;display:flex;"><i style="width:8px"><b style="transform:translateX(-50%) scaleX(0.913);text-shadow:0.5px 0 0 #ffff50;">O</b></i><i style="width:8px"><b style="transform:translateX(-50%);text-shadow:0.5px 0 0 #ffff50;">F</b></i><i style="width:8px"><b style="transform:translateX(-50%);text-shadow:0.5px 0 0 #ffff50;">F</b></i></div>
<div class="bx" style="left:584px;top:138px;width:48px;height:15px;border-width:2px 2px 2px 2px;border-color:#ffffff #4e4e4e #4e4e4e #ffffff;background:#c8c8c8;"></div>
<div class="t" style="left:588.00px;top:140.33px;font-family:'Liberation Sans',sans-serif;font-weight:bold;font-size:10.5px;color:#000;letter-spacing:0.5px;text-shadow:0.8px 0 0 #000;">ON</div>
<div class="bx" style="left:529px;top:164px;width:109px;height:54px;border-width:3px 2px 3px 3px;border-color:#ffffff #4e4e4e #4e4e4e #ffffff;background:#c8c8c8;"></div>
<div class="t" style="left:535.00px;top:166.38px;font-family:'Liberation Serif',serif;font-weight:normal;font-size:19.85px;color:#000;display:flex;"><i style="width:8px"><b style="transform:translateX(-50%) scaleX(0.610);text-shadow:1.0px 0 0 #000;">T</b></i><i style="width:8px"><b style="transform:translateX(-50%) scaleX(0.746);text-shadow:1.0px 0 0 #000;">h</b></i><i style="width:8px"><b style="transform:translateX(-50%);text-shadow:1.0px 0 0 #000;">r</b></i><i style="width:8px"><b style="transform:translateX(-50%) scaleX(0.840);text-shadow:1.0px 0 0 #000;">e</b></i><i style="width:8px"><b style="transform:translateX(-50%) scaleX(0.958);text-shadow:1.0px 0 0 #000;">s</b></i><i style="width:8px"><b style="transform:translateX(-50%) scaleX(0.746);text-shadow:1.0px 0 0 #000;">h</b></i><i style="width:8px"><b style="transform:translateX(-50%);text-shadow:1.0px 0 0 #000;">.</b></i><i style="width:8px"></i><i style="width:8px"><b style="transform:translateX(-50%) scaleX(0.610);text-shadow:1.0px 0 0 #000;">L</b></i><i style="width:8px"><b style="transform:translateX(-50%);text-shadow:1.0px 0 0 #000;">i</b></i><i style="width:8px"><b style="transform:translateX(-50%) scaleX(0.746);text-shadow:1.0px 0 0 #000;">n</b></i><i style="width:8px"><b style="transform:translateX(-50%) scaleX(0.840);text-shadow:1.0px 0 0 #000;">e</b></i></div>
<div class="t" style="left:533.50px;top:195.67px;font-family:'Liberation Mono',monospace;font-weight:bold;font-size:13.33px;color:#000;text-shadow:0.8px 0 0 #000;transform:scale(1.0,0.72);transform-origin:0 0;">-130.0 dBm</div>
<div class="bx" style="left:529px;top:222px;width:109px;height:54px;border-width:3px 2px 2px 3px;border-color:#ffffff #4e4e4e #4e4e4e #ffffff;background:#c8c8c8;"></div>
<div class="t" style="left:535.00px;top:224.38px;font-family:'Liberation Serif',serif;font-weight:normal;font-size:19.85px;color:#000;display:flex;"><i style="width:8px"><b style="transform:translateX(-50%) scaleX(0.610);text-shadow:1.0px 0 0 #000;">T</b></i><i style="width:8px"><b style="transform:translateX(-50%) scaleX(0.746);text-shadow:1.0px 0 0 #000;">h</b></i><i style="width:8px"><b style="transform:translateX(-50%);text-shadow:1.0px 0 0 #000;">r</b></i><i style="width:8px"><b style="transform:translateX(-50%) scaleX(0.840);text-shadow:1.0px 0 0 #000;">e</b></i><i style="width:8px"><b style="transform:translateX(-50%) scaleX(0.958);text-shadow:1.0px 0 0 #000;">s</b></i><i style="width:8px"><b style="transform:translateX(-50%) scaleX(0.746);text-shadow:1.0px 0 0 #000;">h</b></i><i style="width:8px"><b style="transform:translateX(-50%);text-shadow:1.0px 0 0 #000;">.</b></i><i style="width:8px"></i><i style="width:8px"><b style="transform:translateX(-50%) scaleX(0.610);text-shadow:1.0px 0 0 #000;">L</b></i><i style="width:8px"><b style="transform:translateX(-50%);text-shadow:1.0px 0 0 #000;">i</b></i><i style="width:8px"><b style="transform:translateX(-50%) scaleX(0.746);text-shadow:1.0px 0 0 #000;">n</b></i><i style="width:8px"><b style="transform:translateX(-50%) scaleX(0.840);text-shadow:1.0px 0 0 #000;">e</b></i></div>
<div class="bx" style="left:535px;top:254px;width:46px;height:15px;border-width:2px 1px 1px 2px;border-color:#4e4e4e #ffffff #ffffff #4e4e4e;background:#0000a8;"></div>
<div class="t" style="left:539.00px;top:256.05px;font-family:'Liberation Serif',serif;font-weight:bold;font-size:10.7px;color:#ffff50;display:flex;"><i style="width:8px"><b style="transform:translateX(-50%) scaleX(0.913);text-shadow:0.5px 0 0 #ffff50;">O</b></i><i style="width:8px"><b style="transform:translateX(-50%);text-shadow:0.5px 0 0 #ffff50;">F</b></i><i style="width:8px"><b style="transform:translateX(-50%);text-shadow:0.5px 0 0 #ffff50;">F</b></i></div>
<div class="bx" style="left:584px;top:254px;width:48px;height:15px;border-width:2px 2px 2px 2px;border-color:#ffffff #4e4e4e #4e4e4e #ffffff;background:#c8c8c8;"></div>
<div class="t" style="left:588.00px;top:256.33px;font-family:'Liberation Sans',sans-serif;font-weight:bold;font-size:10.5px;color:#000;letter-spacing:0.5px;text-shadow:0.8px 0 0 #000;">ON</div>
<div class="bx" style="left:529px;top:280px;width:109px;height:54px;border-width:3px 2px 2px 3px;border-color:#ffffff #4e4e4e #4e4e4e #ffffff;background:#c8c8c8;"></div>
<div class="t" style="left:535.00px;top:282.38px;font-family:'Liberation Serif',serif;font-weight:normal;font-size:19.85px;color:#000;display:flex;"><i style="width:8px"><b style="transform:translateX(-50%) scaleX(0.670);text-shadow:1.0px 0 0 #000;">S</b></i><i style="width:8px"><b style="transform:translateX(-50%) scaleX(0.840);text-shadow:1.0px 0 0 #000;">c</b></i><i style="width:8px"><b style="transform:translateX(-50%);text-shadow:1.0px 0 0 #000;">r</b></i><i style="width:8px"><b style="transform:translateX(-50%) scaleX(0.840);text-shadow:1.0px 0 0 #000;">e</b></i><i style="width:8px"><b style="transform:translateX(-50%) scaleX(0.840);text-shadow:1.0px 0 0 #000;">e</b></i><i style="width:8px"><b style="transform:translateX(-50%) scaleX(0.746);text-shadow:1.0px 0 0 #000;">n</b></i></div>
<div class="t" style="left:535.00px;top:310.38px;font-family:'Liberation Serif',serif;font-weight:normal;font-size:19.85px;color:#000;display:flex;"><i style="width:8px"><b style="transform:translateX(-50%) scaleX(0.610);text-shadow:1.0px 0 0 #000;">T</b></i><i style="width:8px"><b style="transform:translateX(-50%);text-shadow:1.0px 0 0 #000;">i</b></i><i style="width:8px"><b style="transform:translateX(-50%);text-shadow:1.0px 0 0 #000;">t</b></i><i style="width:8px"><b style="transform:translateX(-50%);text-shadow:1.0px 0 0 #000;">l</b></i><i style="width:8px"><b style="transform:translateX(-50%) scaleX(0.840);text-shadow:1.0px 0 0 #000;">e</b></i><i style="width:8px"><b style="transform:translateX(-50%);text-shadow:1.0px 0 0 #000;">.</b></i><i style="width:8px"><b style="transform:translateX(-50%);text-shadow:1.0px 0 0 #000;">.</b></i></div>
<div class="bx" style="left:529px;top:338px;width:109px;height:54px;border-width:3px 2px 2px 3px;border-color:#4e4e4e #ffffff #ffffff #4e4e4e;background:#c8c8c8;"></div>
<div class="bx" style="left:529px;top:396px;width:109px;height:53px;border-width:3px 2px 2px 3px;border-color:#ffffff #4e4e4e #4e4e4e #ffffff;background:#c8c8c8;"></div>
<div class="t" style="left:535.00px;top:414.38px;font-family:'Liberation Serif',serif;font-weight:normal;font-size:19.85px;color:#000;display:flex;"><i style="width:8px"><b style="transform:translateX(-50%) scaleX(0.419);text-shadow:1.0px 0 0 #000;">M</b></i><i style="width:8px"><b style="transform:translateX(-50%) scaleX(0.746);text-shadow:1.0px 0 0 #000;">o</b></i><i style="width:8px"><b style="transform:translateX(-50%);text-shadow:1.0px 0 0 #000;">r</b></i><i style="width:8px"><b style="transform:translateX(-50%) scaleX(0.840);text-shadow:1.0px 0 0 #000;">e</b></i><i style="width:8px"><b style="transform:translateX(-50%);text-shadow:1.0px 0 0 #000;">.</b></i><i style="width:8px"><b style="transform:translateX(-50%);text-shadow:1.0px 0 0 #000;">.</b></i></div>
</body></html>
